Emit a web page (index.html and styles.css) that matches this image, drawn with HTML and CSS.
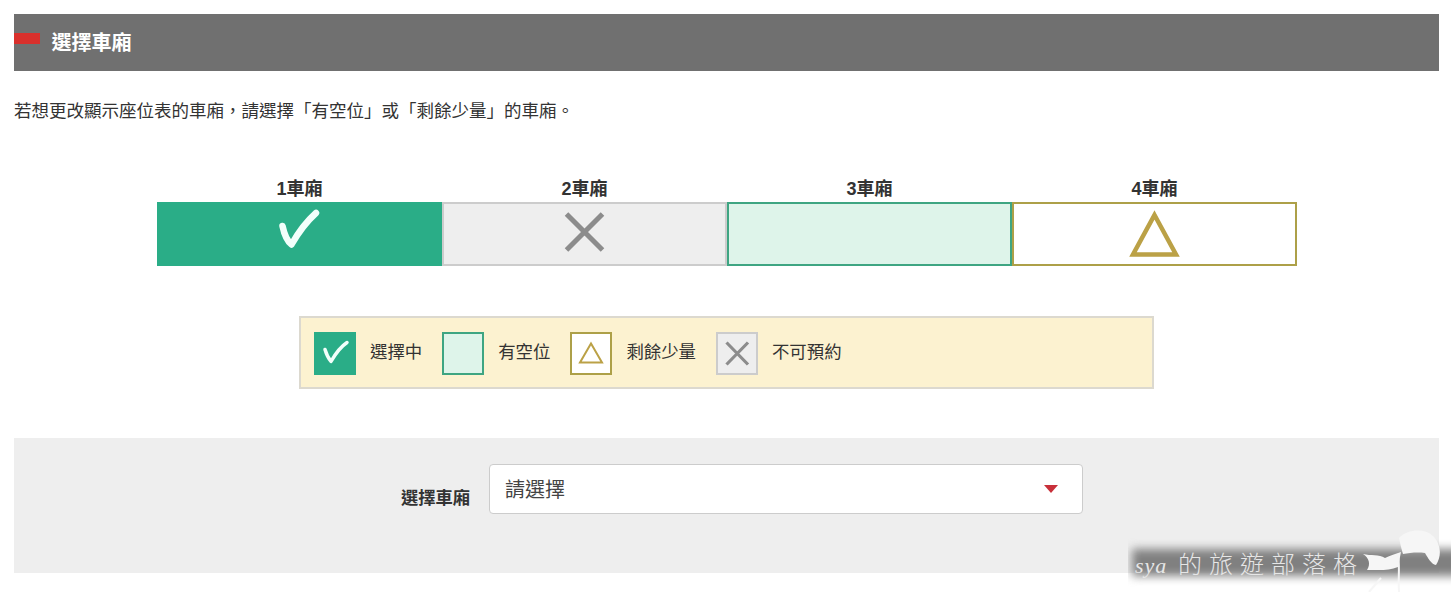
FILE: index.html
```html
<!DOCTYPE html>
<html lang="zh-Hant">
<head>
<meta charset="utf-8">
<title>選擇車廂</title>
<link rel="stylesheet" href="styles.css">
</head>
<body>
<main class="page">
  <h2 class="title"><span class="title-mark"></span><span class="title-text">選擇車廂</span></h2>
  <p class="intro">若想更改顯示座位表的車廂，請選擇「有空位」或「剩餘少量」的車廂。</p>

  <div class="cars">
    <div class="car">
      <div class="car-name">1車廂</div>
      <div class="car-box is-selected">
        <svg class="car-icon" viewBox="0 0 64 64"><path class="ic-check" d="M14.500 26 C16 33 19 41 23.500 44.500 C30 33 38 22 48 13"/></svg>
      </div>
    </div>
    <div class="car">
      <div class="car-name">2車廂</div>
      <div class="car-box is-full">
        <svg class="car-icon" viewBox="0 0 64 64"><path class="ic-cross" d="M13.500 14 L49.500 50 M49.500 14 L13.500 50"/></svg>
      </div>
    </div>
    <div class="car">
      <div class="car-name">3車廂</div>
      <div class="car-box is-free"></div>
    </div>
    <div class="car">
      <div class="car-name">4車廂</div>
      <div class="car-box is-few">
        <svg class="car-icon" viewBox="0 0 64 64"><path class="ic-tri" d="M31.500 15 L53 54.500 L10 54.500 Z"/></svg>
      </div>
    </div>
  </div>

  <div class="legend">
    <span class="swatch is-selected"><svg viewBox="0 0 38 38"><path class="lg-check" d="M9 15 C10.500 20 12.500 24 15 27 C19 20 25 12 31 8"/></svg></span>
    <span class="legend-text t1">選擇中</span>
    <span class="swatch is-free"></span>
    <span class="legend-text t2">有空位</span>
    <span class="swatch is-few"><svg viewBox="0 0 38 38"><path class="lg-tri" d="M19 9 L30 28 L8 28 Z"/></svg></span>
    <span class="legend-text t3">剩餘少量</span>
    <span class="swatch is-full"><svg viewBox="0 0 38 38"><path class="lg-cross" d="M8.500 8 L30 30 M30 8 L8.500 30"/></svg></span>
    <span class="legend-text">不可預約</span>
  </div>

  <div class="panel">
    <span class="panel-label">選擇車廂</span>
    <div class="select">
      <span class="select-text">請選擇</span>
      <span class="select-arrow"></span>
    </div>
  </div>
</main>

<div class="watermark">
  <div class="wm-blob"></div>
  <span class="wm-text"><span class="wm-latin">sya</span>的旅遊部落格</span>
  <svg class="wm-cat" viewBox="0 0 88 62">
    <path class="wm-fill" d="M36 8 C44 -1 62 -2 70 6 C78 14 79 26 73 35 C68 34 65 28 62 23 C54 22 46 23 40 24 C38 18 37 12 36 8 Z"/>
    <path class="wm-fill" d="M0 24 C8 26 16 24 22 28 C26 26 32 24 38 22 L35 37 C26 41 16 40 4 40 C8 34 6 28 0 24 Z"/>
    <path class="wm-line" d="M35 24 C37 36 35 50 36 62 M6 62 L18 48"/>
  </svg>
</div>
</body>
</html>
```

FILE: styles.css
```css
* { box-sizing: border-box; }

html, body {
  margin: 0;
  padding: 0;
  background: #fff;
}

body {
  width: 1451px;
  height: 592px;
  overflow: hidden;
  position: relative;
  font-family: "Liberation Sans", "Noto Sans CJK TC", sans-serif;
  color: #333;
}

.page {
  padding: 14px 12px 0 14px;
}

.title {
  display: flex;
  align-items: center;
  height: 57px;
  margin: 0;
  background: #707070;
  position: relative;
}

.title-mark {
  position: absolute;
  left: 0;
  top: 19px;
  width: 26px;
  height: 11px;
  background: #d9302c;
}

.title-text {
  margin-left: 37.500px;
  padding-bottom: 2px;
  font-size: 20px;
  font-weight: 700;
  color: #fff;
}

.intro {
  margin: 27px 0 0;
  font-size: 17.500px;
  line-height: 26px;
  color: #333;
}

.cars {
  display: grid;
  grid-template-columns: repeat(4, 285px);
  margin: 54px 0 0 143px;
}

.car-name {
  height: 24px;
  font-size: 18px;
  line-height: 22px;
  font-weight: 700;
  text-align: center;
  color: #333;
}

.car-box {
  display: flex;
  align-items: center;
  justify-content: center;
  height: 64px;
  border-width: 2px;
  border-style: solid;
}

.car-icon {
  width: 64px;
  height: 64px;
  flex: none;
  margin-top: -4px;
}

.is-selected { background: #2aad87; border-color: #2aad87; }
.is-full { background: #eee; border-color: #ccc; }
.is-free { background: #def4ea; border-color: #3ea582; }
.is-few { background: #fff; border-color: #ada048; }

.ic-check, .lg-check {
  fill: none;
  stroke: #f2fffb;
  stroke-width: 6.500;
  stroke-linecap: round;
  stroke-linejoin: round;
}

.lg-check { stroke-width: 3.500; }

.ic-cross, .lg-cross {
  fill: none;
  stroke: #8c8c8c;
  stroke-width: 5;
}

.lg-cross { stroke-width: 3.200; }

.ic-tri, .lg-tri {
  fill: none;
  stroke: #bba146;
  stroke-width: 4.500;
}

.lg-tri { stroke-width: 2; }

.legend {
  display: flex;
  align-items: center;
  width: 855px;
  height: 73px;
  margin: 50px 0 0 285px;
  padding: 2px 0 0 13px;
  background: #fcf2d0;
  border: 2px solid #dcd9cf;
}

.swatch {
  display: flex;
  align-items: center;
  justify-content: center;
  width: 42px;
  height: 43px;
  flex: none;
  border-width: 2px;
  border-style: solid;
}

.swatch svg {
  width: 100%;
  height: 100%;
  display: block;
}

.legend-text {
  margin-left: 14px;
  padding-bottom: 6px;
  font-size: 17.400px;
  color: #333;
}

.t1, .t2, .t3 { margin-right: 20px; }

.panel {
  display: flex;
  align-items: flex-start;
  height: 135px;
  margin-top: 49px;
  padding: 26px 0 0 387px;
  background: #eee;
}

.panel-label {
  width: 88px;
  margin-top: 21px;
  font-size: 17.300px;
  line-height: 26px;
  font-weight: 700;
  color: #333;
}

.select {
  display: flex;
  align-items: center;
  justify-content: space-between;
  width: 594px;
  height: 50px;
  padding: 0 24px 0 15px;
  background: #fff;
  border: 1px solid #ccc;
  border-radius: 4px;
}

.select-text {
  padding-bottom: 2px;
  font-size: 20px;
  color: #444;
}

.select-arrow {
  width: 0;
  height: 0;
  border-left: 7px solid transparent;
  border-right: 7px solid transparent;
  border-top: 8px solid #c8303a;
}

.watermark {
  position: absolute;
  left: 1128px;
  top: 530px;
  width: 323px;
  height: 62px;
  overflow: hidden;
}

.wm-blob {
  position: absolute;
  left: 4px;
  top: 19px;
  width: 330px;
  height: 27px;
  background: #808080;
  filter: blur(5px);
}

.wm-text {
  position: absolute;
  left: 7px;
  top: 15px;
  font-family: "Noto Sans CJK TC", sans-serif;
  font-size: 24px;
  font-weight: 300;
  letter-spacing: 7px;
  white-space: nowrap;
  color: #e6e6e6;
  line-height: 36px;
}

.wm-latin {
  display: inline-block;
  width: 43px;
  font-family: "Liberation Serif", serif;
  font-style: italic;
  font-size: 22px;
  letter-spacing: 1px;
}

.wm-cat {
  position: absolute;
  left: 235px;
  top: 0;
  width: 88px;
  height: 62px;
}

.wm-fill { fill: #f6f6f6; }
.wm-line { fill: none; stroke: #f6f6f6; stroke-width: 2; }
```
